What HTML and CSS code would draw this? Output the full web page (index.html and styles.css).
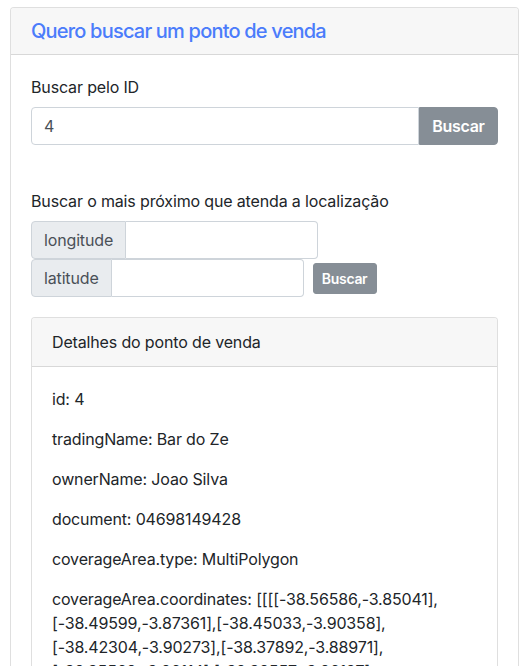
FILE: index.html
```html
<!DOCTYPE html>
<html lang="pt-BR">
<head>
<meta charset="utf-8">
<title>Ponto de venda</title>
<link rel="stylesheet" href="styles.css">
</head>
<body>
<div class="page">
  <div class="card">
    <div class="card-header">
      <h5 class="title">Quero buscar um ponto de venda</h5>
    </div>
    <div class="card-body">
      <div class="form-group id-group">
        <label class="label">Buscar pelo ID</label>
        <div class="input-row">
          <input class="form-control id-input" type="text" value="4">
          <button class="btn btn-append">Buscar</button>
        </div>
      </div>
      <div class="form-group">
        <label class="label">Buscar o mais próximo que atenda a localização</label>
        <div class="geo-row">
          <div class="input-group">
            <span class="addon">longitude</span>
            <input class="form-control geo-input" type="text">
          </div>
        </div>
        <div class="geo-row">
          <div class="input-group">
            <span class="addon">latitude</span>
            <input class="form-control geo-input" type="text">
          </div>
          <button class="btn btn-sm">Buscar</button>
        </div>
      </div>
      <div class="card inner-card">
        <div class="card-header inner-header">Detalhes do ponto de venda</div>
        <div class="card-body">
          <p class="detail">id: 4</p>
          <p class="detail">tradingName: Bar do Ze</p>
          <p class="detail">ownerName: Joao Silva</p>
          <p class="detail">document: 04698149428</p>
          <p class="detail">coverageArea.type: MultiPolygon</p>
          <p class="detail">coverageArea.coordinates: [[[[-38.56586,-3.85041],[-38.49599,-3.87361],[-38.45033,-3.90358],[-38.42304,-3.90273],[-38.37892,-3.88971],[-38.35562,-3.86114],[-38.32557,-3.86187],[-38.31247,-3.82658]]]]</p>
          <p class="detail">address.type: Point</p>
        </div>
      </div>
    </div>
  </div>
</div>
</body>
</html>
```

FILE: styles.css
```css
* { box-sizing: border-box; }

html, body {
  margin: 0;
  background: #fff;
}

body {
  font-family: Inter, "Liberation Sans", Arial, sans-serif;
  font-size: 16px;
  line-height: 24px;
  letter-spacing: -0.15px;
  color: #212529;
}

.page {
  padding: 7px 8px 0 10px;
}

.card {
  border: 1px solid rgba(0, 0, 0, 0.125);
  border-radius: 4px;
  background: #fff;
}

.card-header {
  padding: 12px 20px;
  background: #f7f7f7;
  border-bottom: 1px solid rgba(0, 0, 0, 0.125);
  border-radius: 3px 3px 0 0;
}

.title {
  margin: 0;
  font-size: 20px;
  line-height: 22px;
  font-weight: 500;
  letter-spacing: -0.8px;
  color: #4b7cfb;
}

.card-body {
  padding: 20px;
}

.label {
  display: block;
  margin-bottom: 8px;
}

.id-group {
  margin-bottom: 44px;
}

.input-row {
  display: flex;
}

.form-control {
  font-family: inherit;
  font-size: 16px;
  line-height: 24px;
  letter-spacing: inherit;
  color: #495057;
  height: 38px;
  padding: 6px 12px;
  border: 1px solid #ced4da;
  background: #fff;
  outline: none;
  margin: 0;
}

.id-input {
  flex: 1;
  min-width: 0;
  border-radius: 4px 0 0 4px;
}

.btn {
  font-family: inherit;
  font-weight: 600;
  letter-spacing: -0.3px;
  color: #fff;
  background: #868e96;
  border: 1px solid #868e96;
  margin: 0;
  cursor: pointer;
}

.btn-append {
  height: 38px;
  width: 79px;
  font-size: 16px;
  line-height: 24px;
  padding: 6px 12px;
  border-radius: 0 4px 4px 0;
}

.geo-row {
  display: flex;
  align-items: center;
}

.input-group {
  display: flex;
}

.addon {
  display: flex;
  align-items: center;
  height: 38px;
  padding: 6px 12px;
  color: #495057;
  background: #e9ecef;
  border: 1px solid #ced4da;
  border-radius: 4px 0 0 4px;
}

.geo-input {
  width: 192px;
  border-left: 0;
  border-radius: 0 4px 4px 0;
}

.btn-sm {
  margin-left: 9px;
  height: 31px;
  width: 64px;
  padding: 4px 8px;
  font-size: 14px;
  line-height: 21px;
  border-radius: 3px;
}

.inner-card {
  margin-top: 20px;
}

.inner-header {
  line-height: 24px;
}

.detail {
  margin: 0 0 16px;
}
```
